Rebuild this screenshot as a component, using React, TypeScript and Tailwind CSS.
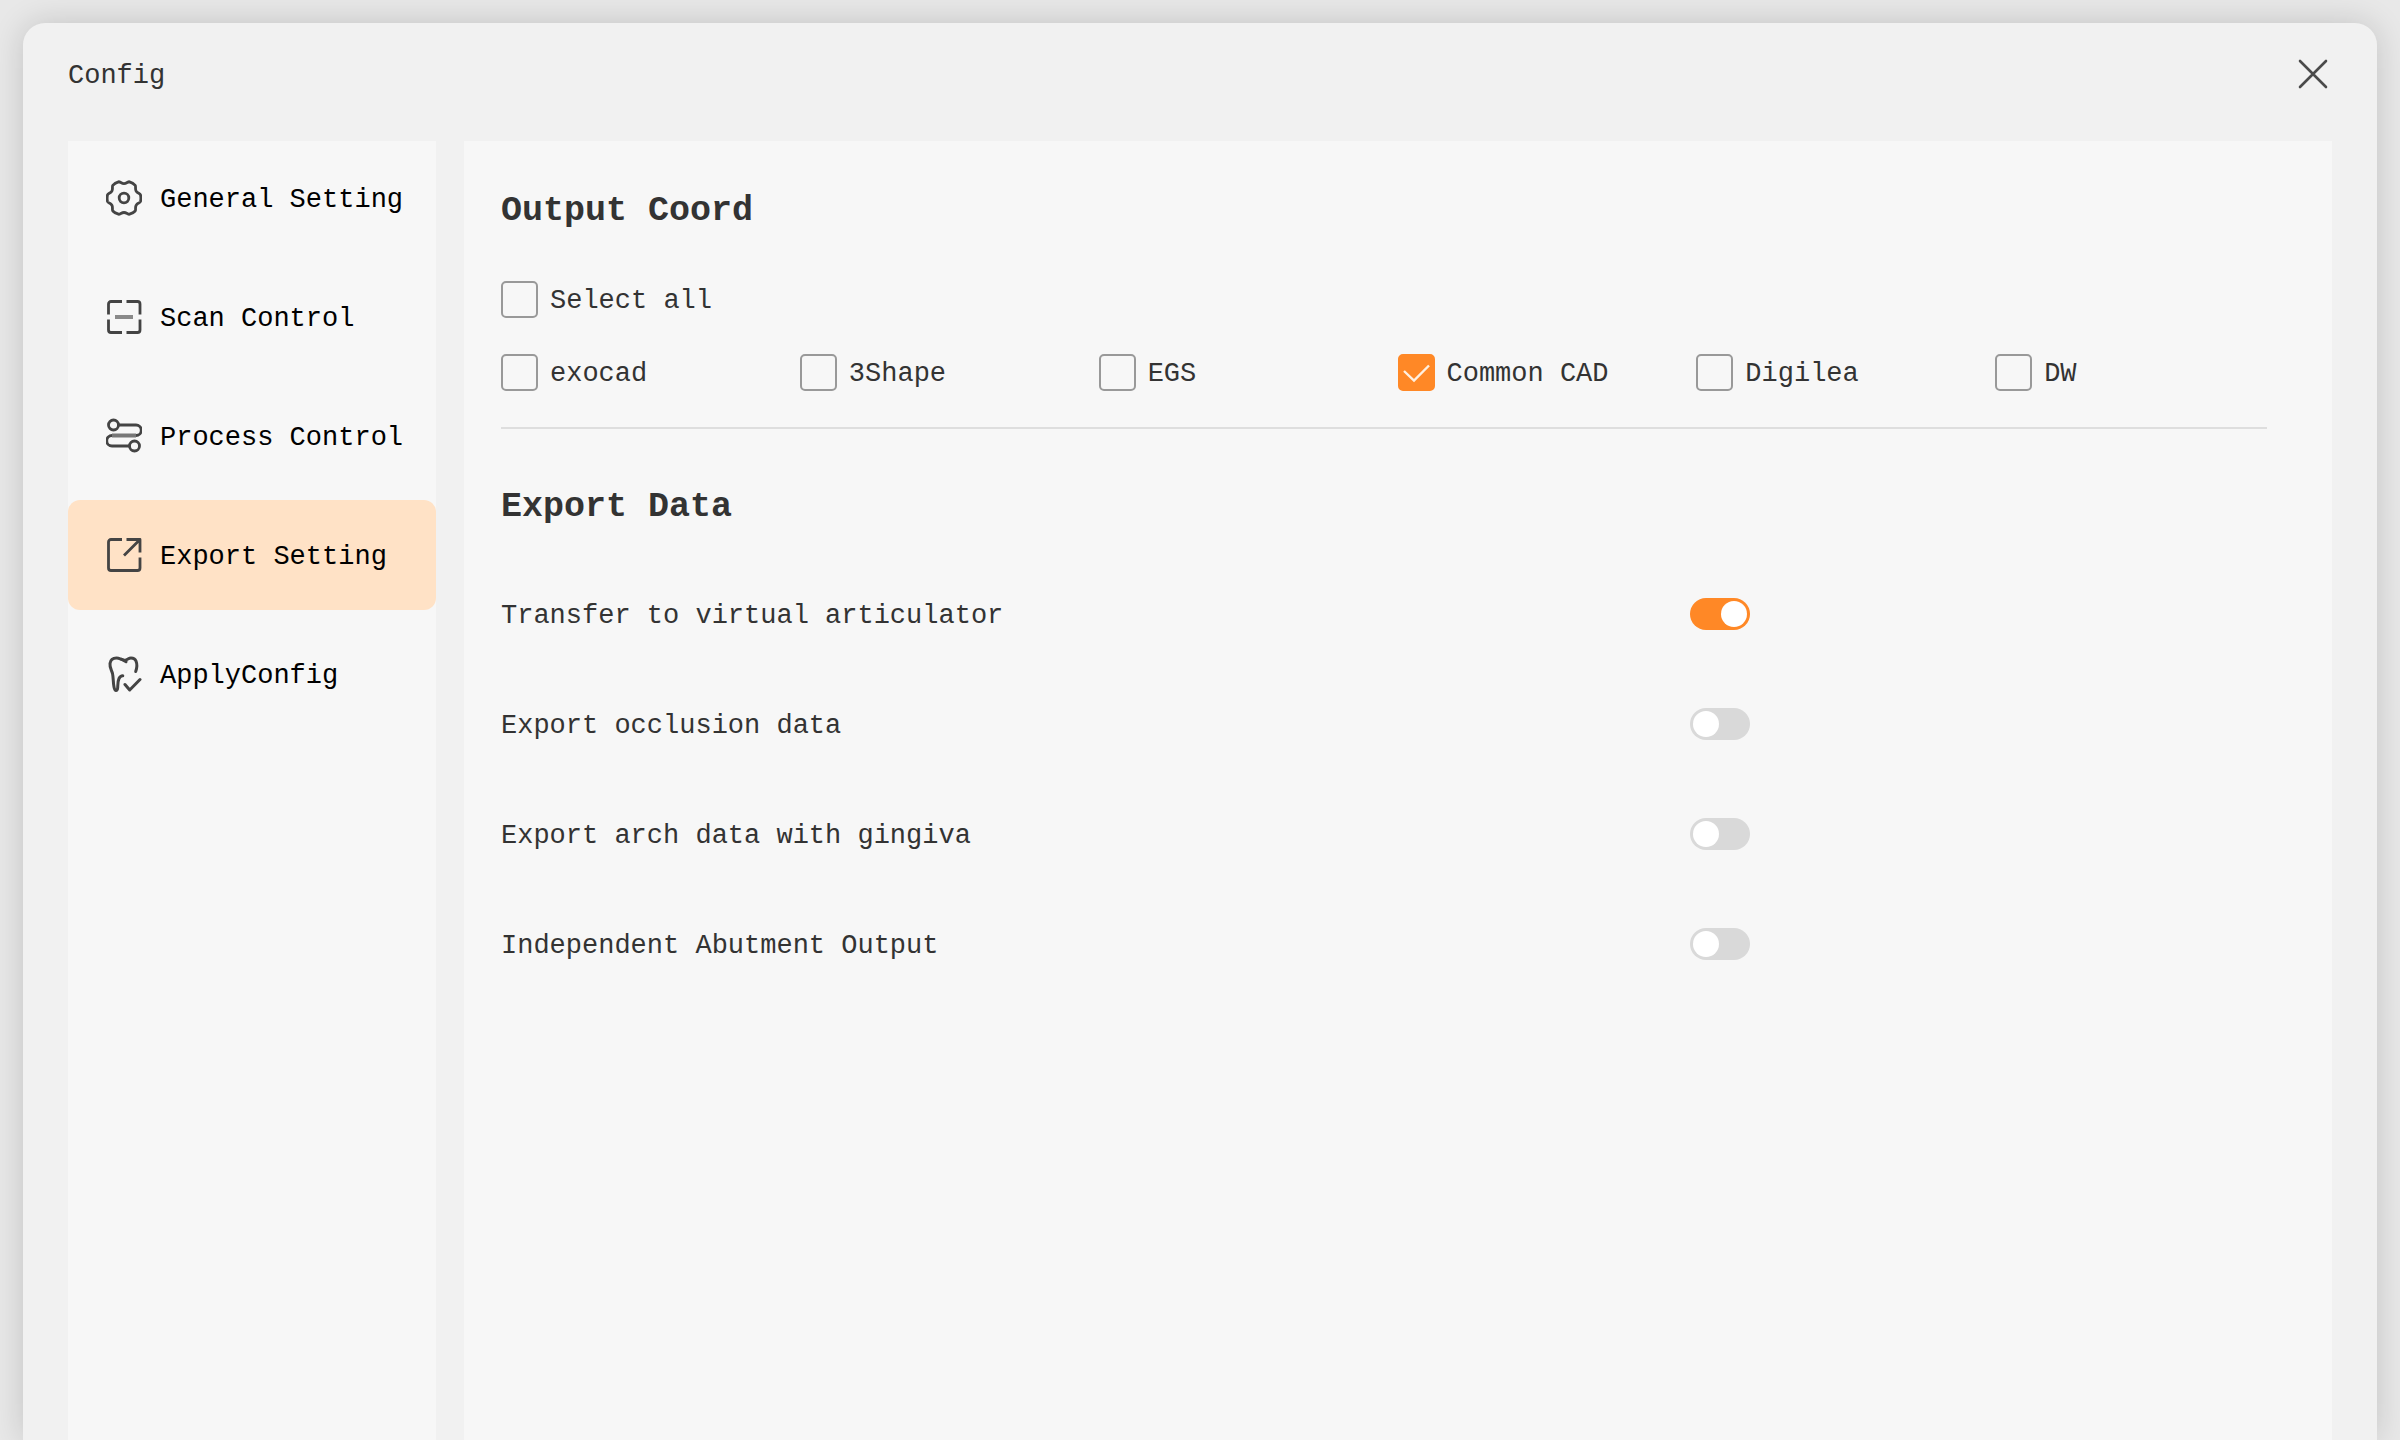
import { useState } from 'react';
import type { ReactNode } from 'react';

const iconProps = {
  width: 36,
  height: 36,
  viewBox: '0 0 36 36',
  fill: 'none',
  stroke: '#444444',
  strokeWidth: 2.8,
  strokeLinecap: 'round' as const,
  strokeLinejoin: 'round' as const,
  'aria-hidden': true,
};

function GearIcon() {
  return (
    <svg {...iconProps}>
      <path d="M12.5 1.8c1.500-.4 3 1.900 5.500 1.900s4-2.300 5.500-1.900c2.200.7 4.300 2 5.700 3.600.9 1.200-.3 3.600.9 5.700 1.200 2.200 4 2.300 4.400 3.800.5 2.200.5 4.400 0 6.600-.4 1.500-3.200 1.600-4.400 3.800-1.200 2.100 0 4.500-.9 5.700-1.400 1.600-3.500 2.500-5.700 3.200-1.500.4-3-1.700-5.500-1.700s-4 2.100-5.500 1.700c-2.200-.7-4.300-1.600-5.700-3.200-.9-1.200.3-3.600-.9-5.700-1.200-2.200-4-2.300-4.400-3.800-.5-2.200-.5-4.400 0-6.600.4-1.500 3.200-1.600 4.400-3.800 1.200-2.100 0-4.500.9-5.700 1.400-1.600 3.500-2.900 5.700-3.600Z" />
      <circle cx="18" cy="18" r="4.800" />
    </svg>
  );
}

function ScanIcon() {
  return (
    <svg {...iconProps} strokeLinecap="butt">
      <path d="M16 2.500H5A2.500 2.500 0 0 0 2.500 5v10.500M20.500 2.500H31.500A2.500 2.500 0 0 1 34 5v10.500M2.500 20.500V31A2.500 2.500 0 0 0 5 33.500H16M34 20.500V31A2.500 2.500 0 0 1 31.500 33.500H20.500" />
      <path d="M9 18h18" stroke="#8a8a8a" strokeWidth="4" />
    </svg>
  );
}

function ProcessIcon() {
  return (
    <svg {...iconProps}>
      <circle cx="7.500" cy="7" r="5" />
      <circle cx="28.500" cy="28" r="5" />
      <path d="M12.500 7H30a5 5 0 0 1 0 10.500H6a5 5 0 0 0 0 10.500h17.500" />
      <path d="M6 17.500h24" stroke="#777777" strokeWidth="4" strokeLinecap="butt" />
    </svg>
  );
}

function ExportIcon() {
  return (
    <svg {...iconProps} strokeLinecap="butt">
      <path d="M16 2.500H5A2.500 2.500 0 0 0 2.500 5v26A2.500 2.500 0 0 0 5 33.500h26.500A2.500 2.500 0 0 0 34 31V20.500" />
      <path d="M20.500 2.500H34V15.500M33 3.500 18 18.500" />
    </svg>
  );
}

function ToothIcon() {
  return (
    <svg {...iconProps} strokeWidth="3">
      <path d="M29.700 15.500c1.300-3.500 1.300-8 .3-10.500-.8-2-2.800-3-5-3-2.500 0-3.500 2-6 2.200C16.500 4.400 13.500 2 10.500 2 7 2 4.500 4 4 7.500c-.5 4 1.500 6.500 2.500 10C7.500 22 7 26 8 31c.4 2.200.9 3.500 2 3.500s1.600-1 1.700-3c.2-4 .1-6.500 1.300-9 .8-1.700 1.800-2.800 3.800-2.800" />
      <path d="m15.500 3.300 4.500 2.500M19 28.500l4.700 5.500L34 23.500" />
    </svg>
  );
}

const NAV_ITEMS: { label: string; icon: ReactNode }[] = [
  { label: 'General Setting', icon: <GearIcon /> },
  { label: 'Scan Control', icon: <ScanIcon /> },
  { label: 'Process Control', icon: <ProcessIcon /> },
  { label: 'Export Setting', icon: <ExportIcon /> },
  { label: 'ApplyConfig', icon: <ToothIcon /> },
];

const COORDS = ['exocad', '3Shape', 'EGS', 'Common CAD', 'Digilea', 'DW'];

const EXPORT_OPTIONS = [
  'Transfer to virtual articulator',
  'Export occlusion data',
  'Export arch data with gingiva',
  'Independent Abutment Output',
];

interface CheckProps {
  label: string;
  checked: boolean;
  onChange: () => void;
}

function Checkbox({ label, checked, onChange }: CheckProps) {
  return (
    <label className="flex items-center gap-[12px] h-[36px] cursor-pointer whitespace-nowrap">
      <span className="grid size-[37px] shrink-0">
        <input
          type="checkbox"
          checked={checked}
          onChange={onChange}
          className="peer col-start-1 row-start-1 appearance-none size-full rounded-[5px] border-2 border-[#999999] checked:border-[#ff8826] checked:bg-[#ff8826]"
        />
        <svg
          viewBox="0 0 37 37"
          fill="none"
          stroke="#fff0e0"
          strokeWidth="2.4"
          className="col-start-1 row-start-1 size-full pointer-events-none invisible peer-checked:visible"
          aria-hidden
        >
          <path d="m6 17 10 9.500L31 11.500" />
        </svg>
      </span>
      <span className="pt-[4px]">{label}</span>
    </label>
  );
}

function Toggle({ label, checked, onChange }: CheckProps) {
  return (
    <label className="grid grid-cols-[1190fr_604fr] items-center h-[110px]">
      <span className="pt-[4px]">{label}</span>
      <input
        type="checkbox"
        role="switch"
        checked={checked}
        onChange={onChange}
        className="appearance-none flex items-center w-[60px] h-[32px] px-[3px] rounded-full cursor-pointer bg-[#d9d9d9] checked:bg-[#ff8826] checked:justify-end before:block before:size-[26px] before:rounded-full before:bg-white"
      />
    </label>
  );
}

export default function App() {
  const [active, setActive] = useState('Export Setting');
  const [coords, setCoords] = useState<string[]>(['Common CAD']);
  const [options, setOptions] = useState<string[]>(['Transfer to virtual articulator']);

  const toggle = (list: string[], item: string) =>
    list.includes(item) ? list.filter((i) => i !== item) : [...list, item];

  const allSelected = coords.length === COORDS.length;

  return (
    <div className="flex flex-col min-h-screen px-[23px] pt-[23px] bg-[#e8e8e8] overflow-hidden font-['Liberation_Mono',monospace] text-[27px] leading-[36px] text-[#333333]">
      <div
        role="dialog"
        aria-label="Config"
        className="flex flex-col flex-1 px-[45px] rounded-t-[22px] bg-[#f1f1f1] shadow-[0_0_32px_rgba(0,0,0,0.16)]"
      >
        <header className="flex items-center justify-between h-[118px] pb-[16px] pr-[3px]">
          <h1 className="pt-[4px]">Config</h1>
          <button type="button" aria-label="Close" className="cursor-pointer">
            <svg width="32" height="32" viewBox="0 0 32 32" stroke="#4a4a4a" strokeWidth="2.600" strokeLinecap="round" aria-hidden>
              <path d="m3 3 26 26M29 3 3 29" />
            </svg>
          </button>
        </header>

        <div className="flex flex-1 gap-[28px]">
          <nav className="flex flex-col gap-[9px] w-[368px] pt-[2px] shrink-0 bg-[#f7f7f7]">
            {NAV_ITEMS.map(({ label, icon }) => (
              <button
                key={label}
                type="button"
                onClick={() => setActive(label)}
                className={`flex items-center gap-[18px] h-[110px] pl-[38px] rounded-[12px] text-black cursor-pointer ${
                  label === active ? 'bg-[#ffe2c6]' : ''
                }`}
              >
                {icon}
                <span className="pt-[4px]">{label}</span>
              </button>
            ))}
          </nav>

          <main className="flex-1 pl-[37px] pr-[38px] pt-[46px] bg-[#f7f7f7]">
            {/* Output coordinate systems */}
            <section>
              <h2 className="text-[35px] leading-[48px] font-bold">Output Coord</h2>
              <div className="mt-[46px] flex">
                <Checkbox
                  label="Select all"
                  checked={allSelected}
                  onChange={() => setCoords(allSelected ? [] : COORDS)}
                />
              </div>
              <div className="mt-[37px] grid grid-cols-6">
                {COORDS.map((name) => (
                  <Checkbox
                    key={name}
                    label={name}
                    checked={coords.includes(name)}
                    onChange={() => setCoords(toggle(coords, name))}
                  />
                ))}
              </div>
              <hr className="mt-[37px] mr-[27px] border-t-2 border-[#dedede]" />
            </section>

            {/* Export data */}
            <section className="mt-[54px]">
              <h2 className="text-[35px] leading-[48px] font-bold">Export Data</h2>
              <div className="mt-[28px]">
                {EXPORT_OPTIONS.map((name) => (
                  <Toggle
                    key={name}
                    label={name}
                    checked={options.includes(name)}
                    onChange={() => setOptions(toggle(options, name))}
                  />
                ))}
              </div>
            </section>
          </main>
        </div>
      </div>
    </div>
  );
}
